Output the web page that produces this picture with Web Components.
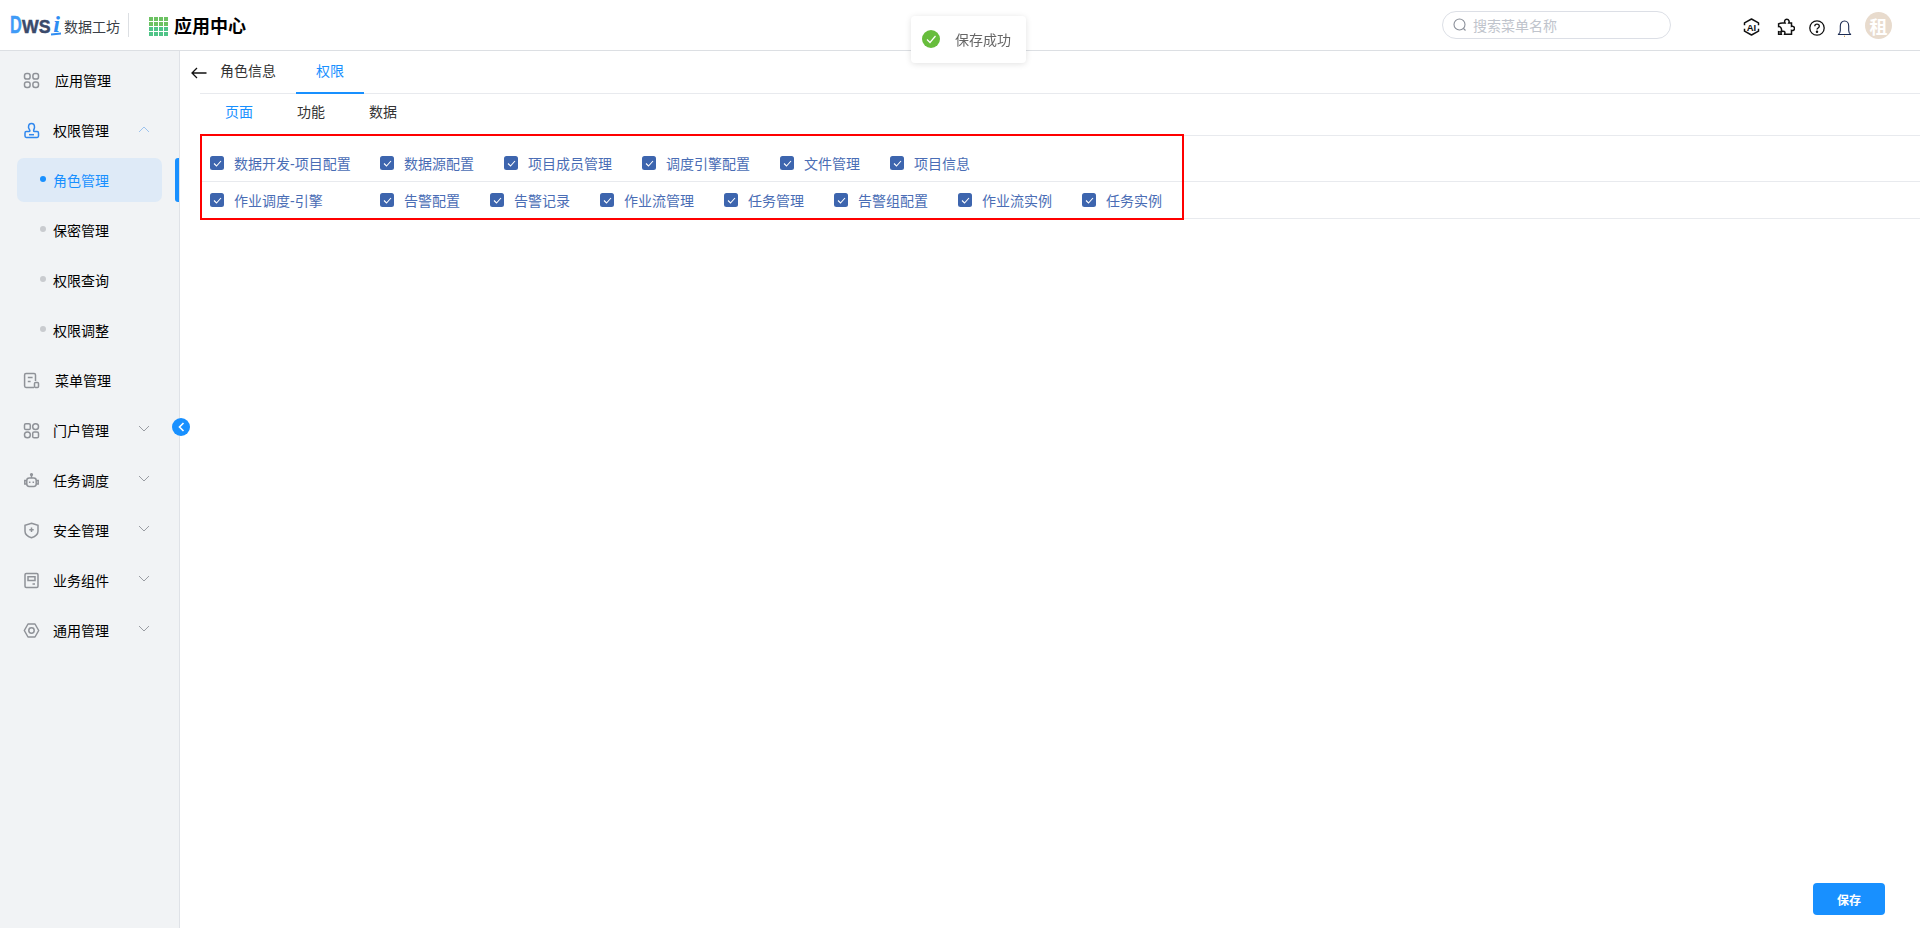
<!DOCTYPE html>
<html lang="zh">
  <head>
    <meta charset="UTF-8" />
    <title>应用中心</title>
    <style>
      html, body {
        margin: 0;
        height: 100%;
        font-family: "Liberation Sans", "Noto Sans CJK SC", sans-serif;
        font-size: 14px;
        background: #fff;
      }
      body { overflow: hidden; }
    </style>
  </head>
  <body>
    <app-shell>
      <top-bar slot="top"></top-bar>
      <side-nav slot="side"></side-nav>
      <role-page slot="main"></role-page>
    </app-shell>
    <save-toast>保存成功</save-toast>

    <script>
      // small helper, every element below only has a style and some markup
      function mount(host, css, html) {
        const shadow = host.attachShadow({ mode: 'open' });
        shadow.innerHTML = `<style>${css}</style>${html}`;
        return shadow;
      }

      const ICONS = {
        app: '<rect x="1.5" y="1.5" width="5.6" height="5.6" rx="2.2"/><rect x="9.900" y="1.5" width="5.6" height="5.6" rx="2.2"/><rect x="1.5" y="9.900" width="5.6" height="5.6" rx="2.2"/><rect x="9.900" y="9.900" width="5.6" height="5.6" rx="2.2"/>',
        user: '<path d="M5.500 5.200C5.500 3.200 6.800 1.600 8.500 1.600s3 1.600 3 3.600c0 1.500-.9 2.300-.9 3.600 0 .5.300.8.900.8h2.700c.7 0 1.300.6 1.300 1.300v3.200c0 .7-.6 1.300-1.300 1.300H3.300c-.7 0-1.300-.6-1.300-1.300v-3.200c0-.7.600-1.300 1.300-1.300H6c.600 0 .900-.3.900-.8 0-1.300-1.400-2.100-1.400-3.600z"/><path d="M6 12.700h5"/>',
        menu: '<path d="M12.500 9V3c0-.8-.6-1.400-1.400-1.400H3c-.8 0-1.400.6-1.400 1.400v11c0 .8.600 1.400 1.400 1.400h8"/><path d="M4.800 5.600h4.800M4.800 9.600h2.800"/><rect x="11.500" y="10.500" width="4" height="5" rx="1"/>',
        portal: '<rect x="1.500" y="1.800" width="5.800" height="5.800" rx="1.400"/><rect x="9.700" y="1.800" width="5.800" height="5.800" rx="2.800"/><rect x="1.500" y="10" width="5.800" height="5.800" rx="2.800"/><rect x="9.700" y="10" width="5.800" height="5.800" rx="1.400"/>',
        robot: '<rect x="3.800" y="6" width="9.400" height="8.400" rx="2.400"/><path d="M8.500 3.600V6M3.800 8.500H1.800v3.600h2M13.200 8.500h2v3.600h-2"/><path d="M6.700 9.500v1.600M10.300 9.500v1.600"/><circle cx="8.500" cy="2.600" r=".9"/>',
        shield: '<path d="M8.500 1.300 15 3.200v6c0 3.200-3.200 5.400-6.500 6.500C5.200 14.600 2 12.400 2 9.200v-6z"/><path d="M8.500 5.600v4.400M6.300 7.800h4.400"/>',
        widget: '<rect x="2" y="1.500" width="13" height="14" rx="1.200"/><path d="M5 4.800h7v3.700H5zM9.500 12h2.500"/>',
        general: '<path d="M5 2h7l3.700 6.500L12 15H5L1.300 8.500z" stroke-linejoin="round"/><circle cx="8.500" cy="8.500" r="2.700"/>',
      };

      class AppShell extends HTMLElement {
        constructor() {
          super();
          mount(this, `
            :host { display: flex; flex-direction: column; height: 928px; }
            .body { flex: 1; display: flex; min-height: 0; }
            .main { flex: 1; min-width: 0; position: relative; }
          `, `
            <slot name="top"></slot>
            <div class="body">
              <slot name="side"></slot>
              <div class="main"><slot name="main"></slot></div>
            </div>
          `);
        }
      }

      class TopBar extends HTMLElement {
        constructor() {
          super();
          const cells = Array.from({ length: 16 }, (_, i) => `<i style="background:${i < 8 ? '#6cc262' : '#4fc487'}"></i>`).join('');
          mount(this, `
            :host {
              display: flex; align-items: center; height: 48px; padding-top: 2px; flex: none;
              border-bottom: 1px solid #dcdfe3; background: #fff;
            }
            .logo { margin-left: 10px; display: flex; align-items: flex-end; width: 109px; height: 24px; margin-bottom: 4px; }
            .d {
              display: block; width: 11px; flex: none; margin-right: 1px; color: #3f9bf7;
              font: 700 24px/24px "Liberation Sans", sans-serif; transform: scaleX(.68); transform-origin: left bottom;
              height: 22px; line-height: 22px; -webkit-text-stroke: .4px #3f9bf7;
            }
            .ws {
              display: block; width: 29px; flex: none; color: #3a4a6b; white-space: nowrap;
              font: 700 19px/19px "Liberation Sans", sans-serif; -webkit-text-stroke: .5px #3a4a6b;
              transform: scaleX(.93); transform-origin: left bottom;
            }
            .i {
              display: block; width: 11px; flex: none; color: #2f8df2; position: relative; height: 24px;
              font: italic 700 24px/24px "Liberation Serif", serif; text-align: center;
              margin-right: 2px;
            }
            .i::after {
              content: ""; position: absolute; left: 0; right: 1px; bottom: 1px; height: 2px; background: #2f8df2;
              transform: rotate(-5deg);
            }
            .name { font-size: 14px; color: #3b3f47; white-space: nowrap; line-height: 20px; margin-bottom: -1px; }
            .sep { width: 1px; height: 24px; background: #dcdfe3; margin-left: 9px; margin-bottom: 2px; }
            .grid {
              display: grid; grid-template-columns: repeat(4, 4px); grid-auto-rows: 4px; gap: 1px;
              margin-left: 20px; width: 19px; margin-top: 1px;
            }
            h1 { margin: 0 0 2px 6px; font-size: 18px; font-weight: 700; color: #000; white-space: nowrap; }
            .search {
              margin-left: auto; width: 229px; height: 28px; box-sizing: border-box;
              border: 1px solid #dcdfe6; border-radius: 14px; display: flex; align-items: center;
              padding-left: 10px; color: #c0c4cc; gap: 6px; margin-bottom: 2px;
            }
            .search svg { flex: none; }
            .icons { display: flex; align-items: center; margin: 0 28px 0 71px; }
            .icons svg { display: block; fill: none; stroke: #111; flex: none; }
            .avatar {
              width: 27px; height: 27px; border-radius: 50%; background: #e8dbcd; color: #fff;
              font-weight: 700; font-size: 18px; display: flex; align-items: center; justify-content: center;
              margin-left: 13px; margin-bottom: 1px;
            }
          `, `
            <div class="logo">
              <span class="d">D</span><span class="ws">WS</span><span class="i">i</span>
              <span class="name">数据工坊</span>
            </div>
            <div class="sep"></div>
            <div class="grid">${cells}</div>
            <h1>应用中心</h1>
            <div class="search">
              <svg width="14" height="14" viewBox="0 0 14 14" fill="none" stroke="#8a8f99" stroke-width="1.100"><circle cx="6.500" cy="6.500" r="5.500"/><path d="M10.500 10.500l2 2"/></svg>
              <span>搜索菜单名称</span>
            </div>
            <div class="icons">
              <svg width="19" height="18" viewBox="0 0 19 18" stroke-width="1.500" style="margin-right:16px;margin-top:2px"><path d="M2.500 7.200V4.800L9.500 1l7 3.800v2.400M16.500 10.800v2.400L9.500 17l-7-3.800v-2.400" stroke-linejoin="round"/><text x="9.500" y="12.500" font-size="9.500" font-weight="700" text-anchor="middle" fill="#111" stroke="none" font-family="Liberation Sans">AI</text></svg>
              <svg width="18" height="18" viewBox="0 0 18 18" stroke-width="1.500" style="margin-right:14px;margin-top:2px"><path d="M5.500 5H8C7.300 3.800 7.400 1.200 9.800 1.200S12.500 3.800 11.800 5h2.700v3.400c1.300-.5 3 .2 3 2s-1.700 2.500-3 2v3.800H7.600c.7-2 .2-3-1.600-3s-2.300 1.200-1.700 3H1.600v-2.500c2.300.6 3-.5 3-1.600S3.600 8 1.600 8.600V5.800C2.500 5.300 4 5 5.500 5z"/></svg>
              <svg width="16" height="16" viewBox="0 0 16 16" stroke-width="1.300" style="margin-right:12px;margin-top:3px"><circle cx="8" cy="8" r="7.200"/><path d="M5.800 6.300C5.800 5 6.800 4.200 8 4.200s2.300.8 2.300 2.100c0 1.700-2.300 1.700-2.300 3.300"/><circle cx="8" cy="11.700" r=".6" fill="#111"/></svg>
              <svg width="15" height="17" viewBox="0 0 15 17" stroke-width="1.100" style="margin-top:4px"><path d="M1 14.500c1.600-.8 2.300-2 2.300-4V6C3.300 3.200 5 1 7.500 1s4.200 2.200 4.200 5v4.500c0 2 .7 3.200 2.300 4z" stroke="#1c2b52"/><path d="M7 16.300h1" stroke="#c98a2a"/></svg>
              <div class="avatar">租</div>
            </div>
          `);
        }
      }

      class NavItem extends HTMLElement {
        constructor() {
          super();
          const icon = this.getAttribute('icon');
          const chev = this.getAttribute('chev');
          const chevPath = chev === 'up' ? 'M1 6l5-5 5 5' : 'M1 1l5 5 5-5';
          mount(this, `
            :host {
              display: flex; align-items: center; height: 50px; position: relative;
              color: #000; padding-left: 23px; box-sizing: border-box;
            }
            .icon { width: 17px; height: 17px; flex: none; fill: none; stroke: #8f9298; stroke-width: 1.500; margin-right: var(--icon-gap, 13px); }
            :host([icon=user]) .icon { stroke: #2f87ee; }
            :host([sub]) { padding-left: 40px; }
            .dot { width: 6px; height: 6px; border-radius: 50%; background: #c9cbcf; margin-right: 7px; flex: none; position: relative; top: -1px; }
            .chev { position: absolute; left: 138px; top: 20px; fill: none; stroke: #9a9da3; stroke-width: 1; }
            :host([chev=up]) .chev { stroke: #9dc3ee; top: 21px; }
            :host([active]) { color: #1890ff; }
            :host([active]) .dot { background: #1890ff; }
            .pill { position: absolute; left: 17px; top: 3px; width: 145px; height: 44px; border-radius: 7px; background: #deeaf7; }
            .bar { position: absolute; left: 175px; top: 3px; width: 4px; height: 44px; border-radius: 3px 0 0 3px; background: #1890ff; }
            span { position: relative; }
          `, `
            ${this.hasAttribute('active') ? '<div class="pill"></div><div class="bar"></div>' : ''}
            ${icon ? `<svg class="icon" viewBox="0 0 17 17">${ICONS[icon]}</svg>` : ''}
            ${this.hasAttribute('sub') ? '<i class="dot"></i>' : ''}
            <span><slot></slot></span>
            ${chev ? `<svg class="chev" width="12" height="7" viewBox="0 0 12 7"><path d="${chevPath}"/></svg>` : ''}
          `);
        }
      }

      class SideNav extends HTMLElement {
        constructor() {
          super();
          mount(this, `
            :host {
              display: block; width: 180px; flex: none; box-sizing: border-box; padding-top: 4px;
              background: #f1f3f5; border-right: 1px solid #dfe2e7; position: relative;
            }
            .toggle {
              position: absolute; left: 172px; top: 367px; width: 18px; height: 18px; border-radius: 50%;
              background: #1890ff; display: flex; align-items: center; justify-content: center; z-index: 2;
            }
            .toggle svg { fill: none; stroke: #fff; stroke-width: 1.600; }
          `, `
            <nav-item icon="app" style="--icon-gap:15px">应用管理</nav-item>
            <nav-item icon="user" chev="up">权限管理</nav-item>
            <nav-item sub active>角色管理</nav-item>
            <nav-item sub>保密管理</nav-item>
            <nav-item sub>权限查询</nav-item>
            <nav-item sub>权限调整</nav-item>
            <nav-item icon="menu" style="--icon-gap:15px">菜单管理</nav-item>
            <nav-item icon="portal" chev="down">门户管理</nav-item>
            <nav-item icon="robot" chev="down">任务调度</nav-item>
            <nav-item icon="shield" chev="down">安全管理</nav-item>
            <nav-item icon="widget" chev="down">业务组件</nav-item>
            <nav-item icon="general" chev="down">通用管理</nav-item>
            <div class="toggle"><svg width="7" height="10" viewBox="0 0 7 10"><path d="M5.500 1 1.500 5l4 4"/></svg></div>
          `);
        }
      }

      class CheckItem extends HTMLElement {
        constructor() {
          super();
          mount(this, `
            :host { display: inline-flex; align-items: center; gap: 10px; margin-right: 30px; color: #4a6db5; white-space: nowrap; }
            :host(.first) { width: 140px; }
            .box { width: 14px; height: 14px; border-radius: 2.500px; background: #3d65ae; display: flex; align-items: center; justify-content: center; flex: none; }
            svg { fill: none; stroke: #fff; stroke-width: 1.100; }
          `, `
            <div class="box"><svg width="9" height="7" viewBox="0 0 9 7"><path d="M1 3.500l2.500 2.500L8 1"/></svg></div>
            <slot></slot>
          `);
        }
      }

      class CheckRow extends HTMLElement {
        constructor() {
          super();
          mount(this, `
            :host {
              display: flex; align-items: center; height: 37px; box-sizing: border-box;
              padding-left: 10px; border-bottom: 1px solid #e8eaee;
            }
          `, `<slot></slot>`);
        }
      }

      class RolePage extends HTMLElement {
        constructor() {
          super();
          mount(this, `
            :host { display: block; height: 100%; position: relative; padding-left: 20px; box-sizing: border-box; }
            .back { position: absolute; left: 11px; top: 16px; fill: none; stroke: #111; stroke-width: 1.300; }
            .tabs { display: flex; height: 42px; border-bottom: 1px solid #e8eaee; padding-left: 20px; }
            .tab { color: #333; line-height: 40px; margin-right: 40px; position: relative; }
            .tab.on { color: #1890ff; }
            .tab.on::after {
              content: ""; position: absolute; left: -20px; right: -20px; bottom: -1px; height: 2px; background: #1890ff;
            }
            .subs { display: flex; height: 42px; box-sizing: border-box; padding: 0 0 7px 25px; border-bottom: 1px solid #e8eaee; align-items: center; gap: 44px; color: #333; }
            .subs .on { color: #1890ff; }
            .rows { padding-top: 9px; }
            .mark {
              position: absolute; left: 20px; top: 83px; width: 984px; height: 86px; box-sizing: border-box;
              border: 2px solid #f00; pointer-events: none;
            }
            .save {
              position: absolute; right: 35px; bottom: 13px; width: 72px; height: 32px; border-radius: 4px;
              background: #1890ff; color: #fff; font-size: 12px; font-weight: 700; border: 0; font-family: inherit; padding: 0;
            }
          `, `
            <svg class="back" width="16" height="12" viewBox="0 0 16 12"><path d="M15.500 6H1M6 1 1 6l5 5"/></svg>
            <div class="tabs">
              <div class="tab">角色信息</div>
              <div class="tab on">权限</div>
            </div>
            <div class="subs">
              <div class="on">页面</div><div>功能</div><div>数据</div>
            </div>
            <div class="rows">
              <check-row>
                <check-item class="first">数据开发-项目配置</check-item>
                <check-item>数据源配置</check-item>
                <check-item>项目成员管理</check-item>
                <check-item>调度引擎配置</check-item>
                <check-item>文件管理</check-item>
                <check-item>项目信息</check-item>
              </check-row>
              <check-row>
                <check-item class="first">作业调度-引擎</check-item>
                <check-item>告警配置</check-item>
                <check-item>告警记录</check-item>
                <check-item>作业流管理</check-item>
                <check-item>任务管理</check-item>
                <check-item>告警组配置</check-item>
                <check-item>作业流实例</check-item>
                <check-item>任务实例</check-item>
              </check-row>
            </div>
            <div class="mark"></div>
            <button class="save">保存</button>
          `);
        }
      }

      class SaveToast extends HTMLElement {
        constructor() {
          super();
          mount(this, `
            :host {
              position: fixed; left: 911px; top: 16px; width: 115px; height: 47px; box-sizing: border-box;
              background: #fff; border-radius: 4px; box-shadow: 0 1px 6px rgba(0,0,0,.12);
              display: flex; align-items: center; padding: 0 0 2px 11px; color: #666; gap: 15px; z-index: 9;
            }
            svg { flex: none; }
          `, `
            <svg width="18" height="18" viewBox="0 0 18 18"><circle cx="9" cy="9" r="9" fill="#67bd3c"/><path d="M5 9.500l3 3 5.500-6.500" fill="none" stroke="#fff" stroke-width="1.200"/></svg>
            <slot></slot>
          `);
        }
      }

      customElements.define('app-shell', AppShell);
      customElements.define('top-bar', TopBar);
      customElements.define('nav-item', NavItem);
      customElements.define('side-nav', SideNav);
      customElements.define('check-item', CheckItem);
      customElements.define('check-row', CheckRow);
      customElements.define('role-page', RolePage);
      customElements.define('save-toast', SaveToast);
    </script>
  </body>
</html>
